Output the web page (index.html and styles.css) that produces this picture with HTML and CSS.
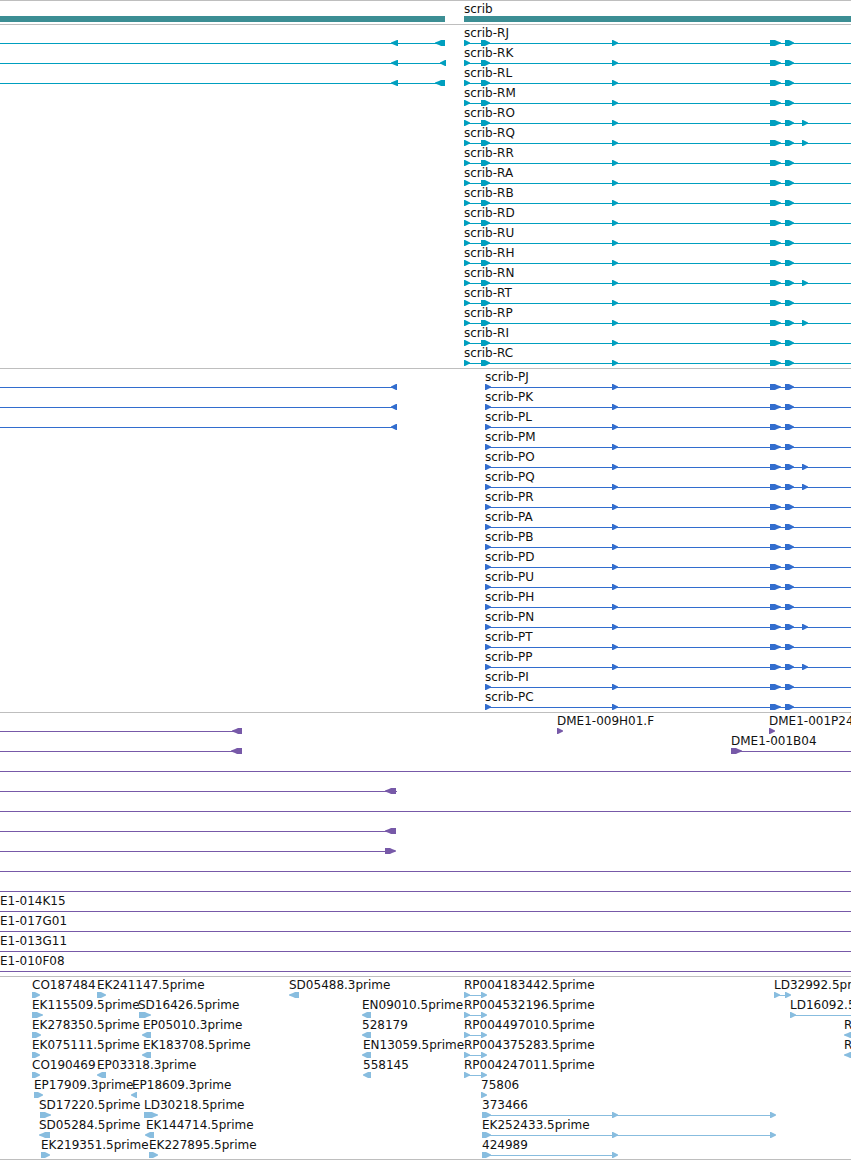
FILE: index.html
```html
<!DOCTYPE html>
<html lang="en">
<head>
<meta charset="utf-8">
<title>Genome browser: scrib</title>
<link rel="stylesheet" href="styles.css">
</head>
<body>
<main class="browser" id="browser"></main>
<script src="tracks.js"></script>
</body>
</html>
```

FILE: styles.css
```css
body {
  margin: 0;
  background: #fff;
  color: #111;
  font-family: "DejaVu Sans", sans-serif;
  font-size: 12px;
  line-height: 14px;
}

.browser {
  display: flex;
  flex-direction: column;
  overflow: hidden;
  border-top: 1px solid #bebebe;
}

.track {
  display: flex;
  flex-direction: column;
  padding: 1px 0 2px;
  border-bottom: 1px solid #bebebe;
}

.track:last-child {
  padding-bottom: 1px;
}

.track-gene { color: #3c8e94; }
.track-transcript { color: #009fbf; }
.track-protein { color: #326dce; }
.track-clone { color: #7759a8; }
.track-est { color: #88bddf; }

.row {
  position: relative;
  height: 20px;
}

.features {
  display: block;
  width: 100%;
  height: 20px;
  fill: currentColor;
}

.label {
  position: absolute;
  top: 0;
  color: #111;
  white-space: nowrap;
}
```

FILE: tracks.js
```js
// A row holds labels [text, x], lines [from, to], bars [from, to]
// and exons [from, to, strand]. A "to" of null runs to the window's edge.
const SVG = "http://www.w3.org/2000/svg";
const R = "+";
const L = "-";

function model(letter, prefix, start, first) {
  const extended = "OQNP";
  const exons = [...first, [612, 618, R], [770, 781, R], [785, 794, R]];
  if (extended.includes(letter)) exons.push([802, 808, R]);
  return {
    labels: [["scrib-" + prefix + letter, start]],
    lines: [[start, null]],
    exons
  };
}

const letters = [..."JKLMOQRABDUHNTPIC"];

const transcripts = letters.map(l => model(l, "R", 464, [[464, 470, R], [481, 490, R]]));
[435, 440, 435].forEach((x, i) => {
  transcripts[i].lines.push([0, x + 3]);
  transcripts[i].exons.push([391, 398, L], [x, x === 440 ? 446 : 445, L]);
});

const proteins = letters.map(l => model(l, "P", 485, [[485, 491, R]]));
for (let i = 0; i < 3; i++) {
  proteins[i].lines.push([0, 394]);
  proteins[i].exons.push([391, 397, L]);
}

const full = { lines: [[0, null]] };
const clones = [
  { labels: [["DME1-009H01.F", 557], ["DME1-001P24", 769]], lines: [[0, 242]],
    exons: [[232, 242, L], [557, 563, R], [769, 775, R]] },
  { labels: [["DME1-001B04", 731]], lines: [[0, 242], [731, null]],
    exons: [[231, 242, L], [731, 742, R]] },
  full,
  { lines: [[0, 397]], exons: [[385, 396, L]] },
  full,
  { lines: [[0, 396]], exons: [[385, 396, L]] },
  { lines: [[0, 392]], exons: [[385, 396, R]] },
  full,
  full,
  ...["E1-014K15", "E1-017G01", "E1-013G11", "E1-010F08"].map(t => ({ ...full, labels: [[t, 0]] }))
];

const ests = [
  { labels: [["CO187484", 32], ["EK241147.5prime", 97], ["SD05488.3prime", 289], ["RP004183442.5prime", 464], ["LD32992.5prime", 774]],
    lines: [[464, 484], [774, 788]],
    exons: [[32, 40, R], [97, 106, R], [289, 299, L], [464, 470, R], [481, 487, R], [774, 780, R], [785, 791, R]] },
  { labels: [["EK115509.5prime", 32], ["SD16426.5prime", 138], ["EN09010.5prime", 362], ["RP004532196.5prime", 464], ["LD16092.5prime", 790]],
    lines: [[464, 484], [790, null]],
    exons: [[32, 43, R], [139, 151, R], [362, 371, L], [464, 470, R], [481, 487, R], [790, 796, R]] },
  { labels: [["EK278350.5prime", 32], ["EP05010.3prime", 143], ["528179", 362], ["RP004497010.5prime", 464], ["R", 844]],
    lines: [[464, 484]],
    exons: [[32, 41, R], [142, 151, L], [362, 371, L], [464, 470, R], [481, 487, R], [844, 855, L]] },
  { labels: [["EK075111.5prime", 32], ["EK183708.5prime", 143], ["EN13059.5prime", 363], ["RP004375283.5prime", 464], ["R", 844]],
    lines: [[464, 484]],
    exons: [[32, 40, R], [142, 151, L], [362, 371, L], [464, 470, R], [481, 487, R], [844, 855, L]] },
  { labels: [["CO190469", 32], ["EP03318.3prime", 97], ["558145", 363], ["RP004247011.5prime", 464]],
    lines: [[464, 484]],
    exons: [[32, 40, R], [97, 106, L], [363, 371, L], [464, 470, R], [481, 487, R]] },
  { labels: [["EP17909.3prime", 34], ["EP18609.3prime", 132], ["75806", 481]],
    exons: [[34, 43, R], [131, 137, L], [481, 487, R]] },
  { labels: [["SD17220.5prime", 39], ["LD30218.5prime", 144], ["373466", 482]],
    lines: [[482, 773]],
    exons: [[40, 51, R], [144, 158, R], [482, 491, R], [612, 618, R], [770, 776, R]] },
  { labels: [["SD05284.5prime", 39], ["EK144714.5prime", 146], ["EK252433.5prime", 482]],
    lines: [[482, 773]],
    exons: [[39, 50, L], [145, 154, L], [482, 491, R], [612, 618, R], [770, 776, R]] },
  { labels: [["EK219351.5prime", 41], ["EK227895.5prime", 149], ["424989", 482]],
    lines: [[482, 615]],
    exons: [[41, 50, R], [149, 158, R], [482, 491, R], [612, 618, R]] }
];

const tracks = [
  ["gene", [{ labels: [["scrib", 464]], bars: [[0, 445], [464, null]] }]],
  ["transcript", transcripts],
  ["protein", proteins],
  ["clone", clones],
  ["est", ests]
];

function shape(svg, name, attributes) {
  const node = document.createElementNS(SVG, name);
  for (const key in attributes) node.setAttribute(key, attributes[key]);
  svg.append(node);
}

function band(svg, [from, to], y, height) {
  shape(svg, "rect", { x: from, y, height, width: to === null ? "100%" : to - from });
}

// Short exons are plain triangles; longer ones are a block with a tapered head.
function exon(svg, [from, to, strand]) {
  const dir = strand === R ? 1 : -1;
  const tip = strand === R ? to : from;
  const back = strand === R ? from : to;
  const reach = to - from < 10 ? 5 : 6;
  const neck = tip - dir * reach;
  const points = to - from < 8
    ? [[back, 14], [back + dir, 14], [tip, 16.5], [tip, 17.5], [back + dir, 20], [back, 20]]
    : [[back, 14], [neck, 14], [neck + dir * 2, 15], [tip, 16.5], [tip, 17.5], [neck + dir * 2, 19], [neck, 20], [back, 20]];
  shape(svg, "polygon", { points: points.join(" ") });
}

const browser = document.getElementById("browser");
for (const [name, rows] of tracks) {
  const track = document.createElement("section");
  track.className = "track track-" + name;
  for (const { labels = [], lines = [], bars = [], exons = [] } of rows) {
    const row = document.createElement("div");
    row.className = "row";
    const svg = document.createElementNS(SVG, "svg");
    svg.setAttribute("class", "features");
    lines.forEach(l => band(svg, l, 17, 1));
    bars.forEach(b => band(svg, b, 14, 6));
    exons.forEach(e => exon(svg, e));
    row.append(svg);
    for (const [text, x] of labels) {
      const label = document.createElement("span");
      label.className = "label";
      label.style.left = x + "px";
      label.textContent = text;
      row.append(label);
    }
    track.append(row);
  }
  browser.append(track);
}
```
